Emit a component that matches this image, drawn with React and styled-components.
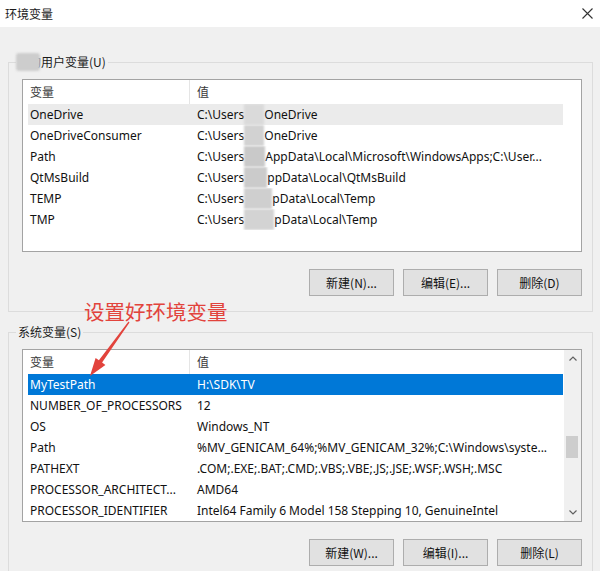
import React from "react";
import styled, { createGlobalStyle } from "styled-components";

const GlobalStyle = createGlobalStyle`
  html, body { margin: 0; padding: 0; background: #f0f0f0; }
  body {
    width: 600px; height: 571px; overflow: hidden;
    font-family: "Noto Sans", "Noto Sans CJK SC", sans-serif;
  }
  * { box-sizing: border-box; }
`;

const CJK = `"Noto Sans CJK SC", "Noto Sans", sans-serif`;

const Window = styled.div`
  position: relative;
  width: 600px;
  height: 571px;
  background: #f0f0f0;
  display: flex;
  flex-direction: column;
  overflow: hidden;
`;

const TitleBar = styled.div`
  flex: none;
  height: 27px;
  background: #ffffff;
  display: flex;
  align-items: center;
  justify-content: space-between;
  padding: 0 4px 0 5px;
`;

const Title = styled.span`
  font-family: ${CJK};
  font-size: 12px;
  line-height: 16px;
  color: #1a1a1a;
`;

const CloseIcon = styled.svg`
  width: 11px;
  height: 11px;
  margin-right: 3px;
`;

const Body = styled.div`
  display: flex;
  flex-direction: column;
  gap: 12px;
  padding: 27px 7px 0 8px;
`;

const Group = styled.fieldset`
  margin: 0;
  min-width: 0;
  border: 1px solid #dcdcdc;
  padding: 9px 10px 15px 13px;
`;

const Legend = styled.legend`
  margin-left: -6px;
  padding: 0 2px;
  display: flex;
  align-items: center;
  height: 16px;
  font-family: ${CJK};
  font-size: 12px;
  line-height: 16px;
  color: #1a1a1a;
`;

const NameMask = styled.span`
  position: relative;
  z-index: 1;
  width: 24px;
  height: 18px;
  margin-left: -2px;
  margin-right: -11px;
  background: #cdcdcd;
  border-radius: 3px;
  filter: blur(1.2px);
`;

const ListBox = styled.div`
  height: 173px;
  border: 1px solid #a3a3a3;
  background: #ffffff;
  display: flex;
`;

const ListMain = styled.div`
  flex: 1;
  min-width: 0;
  display: flex;
  flex-direction: column;
`;

const HeaderRow = styled.div`
  flex: none;
  height: 24px;
  display: grid;
  grid-template-columns: 167px 1fr;
  font-family: ${CJK};
  font-size: 12px;
  color: #3a3a3a;
`;

const HeaderCell = styled.div`
  padding-left: 7px;
  line-height: 24px;
  border-right: ${(p) => (p.$divider ? "1px solid #e5e5e5" : "none")};
`;

const Row = styled.div`
  flex: none;
  height: 21px;
  margin: 0 1px 0 5px;
  display: grid;
  grid-template-columns: 167px 1fr;
  background: ${(p) => (p.$selected ? "#0078d7" : p.$hover ? "#ebebeb" : "transparent")};
  color: ${(p) => (p.$selected ? "#ffffff" : "#111111")};
  font-size: 12px;
  line-height: 21px;
`;

const Cell = styled.div`
  padding-left: 2px;
  white-space: nowrap;
  overflow: hidden;
  display: flex;
`;

const Mosaic = styled.span`
  display: inline-block;
  flex: none;
  width: ${(p) => p.$w}px;
  height: 21px;
  background: ${(p) => p.$shade};
  filter: blur(1px);
`;

const ScrollGap = styled.div`
  flex: none;
  width: 17px;
`;

const ScrollBar = styled.div`
  flex: none;
  width: 17px;
  display: flex;
  flex-direction: column;
  background: #f0f0f0;
`;

const ScrollArrow = styled.div`
  flex: none;
  height: 17px;
  display: flex;
  align-items: center;
  justify-content: center;
`;

const Track = styled.div`
  flex: 1;
  display: flex;
  flex-direction: column;
`;

const Thumb = styled.div`
  flex: none;
  margin: 0 3px 0 2px;
  background: #cdcdcd;
`;

const ButtonRow = styled.div`
  display: flex;
  justify-content: flex-end;
  gap: 9px;
  margin-top: 17px;
`;

const Button = styled.button`
  width: 85px;
  height: 27px;
  padding: 0;
  background: #e1e1e1;
  border: 1px solid #adadad;
  font-family: ${CJK};
  font-size: 12px;
  color: #111111;
`;

const Note = styled.div`
  position: absolute;
  left: 84px;
  top: 299px;
  font-family: ${CJK};
  font-size: 20.5px;
  line-height: 24px;
  color: #e2433c;
  white-space: nowrap;
`;

const ArrowLayer = styled.svg`
  position: absolute;
  left: 0;
  top: 0;
  width: 600px;
  height: 571px;
  pointer-events: none;
`;

const userVars = [
  { name: "OneDrive", w: 20, shade: "#dadada", post: "OneDrive", hover: true },
  { name: "OneDriveConsumer", w: 20, shade: "#d2d2d2", post: "OneDrive" },
  { name: "Path", w: 21, shade: "#c9c9c9", post: "AppData\\Local\\Microsoft\\WindowsApps;C:\\User..." },
  { name: "QtMsBuild", w: 23, shade: "#cbcbcb", post: "ppData\\Local\\QtMsBuild" },
  { name: "TEMP", w: 28, shade: "#cfcfcf", post: "pData\\Local\\Temp" },
  { name: "TMP", w: 30, shade: "#d3d3d3", post: "pData\\Local\\Temp" },
];

const sysVars = [
  ["MyTestPath", "H:\\SDK\\TV"],
  ["NUMBER_OF_PROCESSORS", "12"],
  ["OS", "Windows_NT"],
  ["Path", "%MV_GENICAM_64%;%MV_GENICAM_32%;C:\\Windows\\syste..."],
  ["PATHEXT", ".COM;.EXE;.BAT;.CMD;.VBS;.VBE;.JS;.JSE;.WSF;.WSH;.MSC"],
  ["PROCESSOR_ARCHITECT...", "AMD64"],
  ["PROCESSOR_IDENTIFIER", "Intel64 Family 6 Model 158 Stepping 10, GenuineIntel"],
];

const scroll = { total: 42, visible: 7, first: 21, track: 137 };

function Header() {
  return (
    <HeaderRow>
      <HeaderCell $divider>变量</HeaderCell>
      <HeaderCell>值</HeaderCell>
    </HeaderRow>
  );
}

function Chevron({ up }) {
  return (
    <svg width="8" height="5" viewBox="0 0 8 5">
      <path
        d={up ? "M0.5 4.5 L4 1 L7.5 4.5" : "M0.5 0.5 L4 4 L7.5 0.5"}
        fill="none"
        stroke="#606060"
        strokeWidth="1.2"
      />
    </svg>
  );
}

export default function App() {
  const thumbH = (scroll.track * scroll.visible) / scroll.total;
  const thumbTop =
    ((scroll.track - thumbH) * scroll.first) / (scroll.total - scroll.visible);

  return (
    <>
      <GlobalStyle />
      <Window>
        <TitleBar>
          <Title>环境变量</Title>
          <CloseIcon viewBox="0 0 11 11">
            <path d="M0.5 0.5 L10.5 10.5 M10.5 0.5 L0.5 10.5" stroke="#333" strokeWidth="1.1" />
          </CloseIcon>
        </TitleBar>
        <Body>
          <Group>
            <Legend>
              <NameMask />
              的用户变量(U)
            </Legend>
            <ListBox>
              <ListMain>
                <Header />
                {userVars.map((v) => (
                  <Row key={v.name} $hover={v.hover}>
                    <Cell>{v.name}</Cell>
                    <Cell>
                      C:\Users
                      <Mosaic $w={v.w} $shade={v.shade} />
                      {v.post}
                    </Cell>
                  </Row>
                ))}
              </ListMain>
              <ScrollGap />
            </ListBox>
            <ButtonRow>
              <Button>新建(N)...</Button>
              <Button>编辑(E)...</Button>
              <Button>删除(D)</Button>
            </ButtonRow>
          </Group>
          <Group>
            <Legend>系统变量(S)</Legend>
            <ListBox>
              <ListMain>
                <Header />
                {sysVars.map(([k, v], i) => (
                  <Row key={k} $selected={i === 0}>
                    <Cell>{k}</Cell>
                    <Cell>{v}</Cell>
                  </Row>
                ))}
              </ListMain>
              <ScrollBar>
                <ScrollArrow>
                  <Chevron up />
                </ScrollArrow>
                <Track>
                  <Thumb style={{ marginTop: thumbTop, height: thumbH }} />
                </Track>
                <ScrollArrow>
                  <Chevron />
                </ScrollArrow>
              </ScrollBar>
            </ListBox>
            <ButtonRow>
              <Button>新建(W)...</Button>
              <Button>编辑(I)...</Button>
              <Button>删除(L)</Button>
            </ButtonRow>
          </Group>
        </Body>
        <Note>设置好环境变量</Note>
        <ArrowLayer viewBox="0 0 600 571">
          <polygon
            points="128.5,321.6 98.9,360.2 95.6,357.9 90,376 105.4,364.9 102.1,362.6 129.5,322.4"
            fill="#e2433c"
          />
        </ArrowLayer>
      </Window>
    </>
  );
}
